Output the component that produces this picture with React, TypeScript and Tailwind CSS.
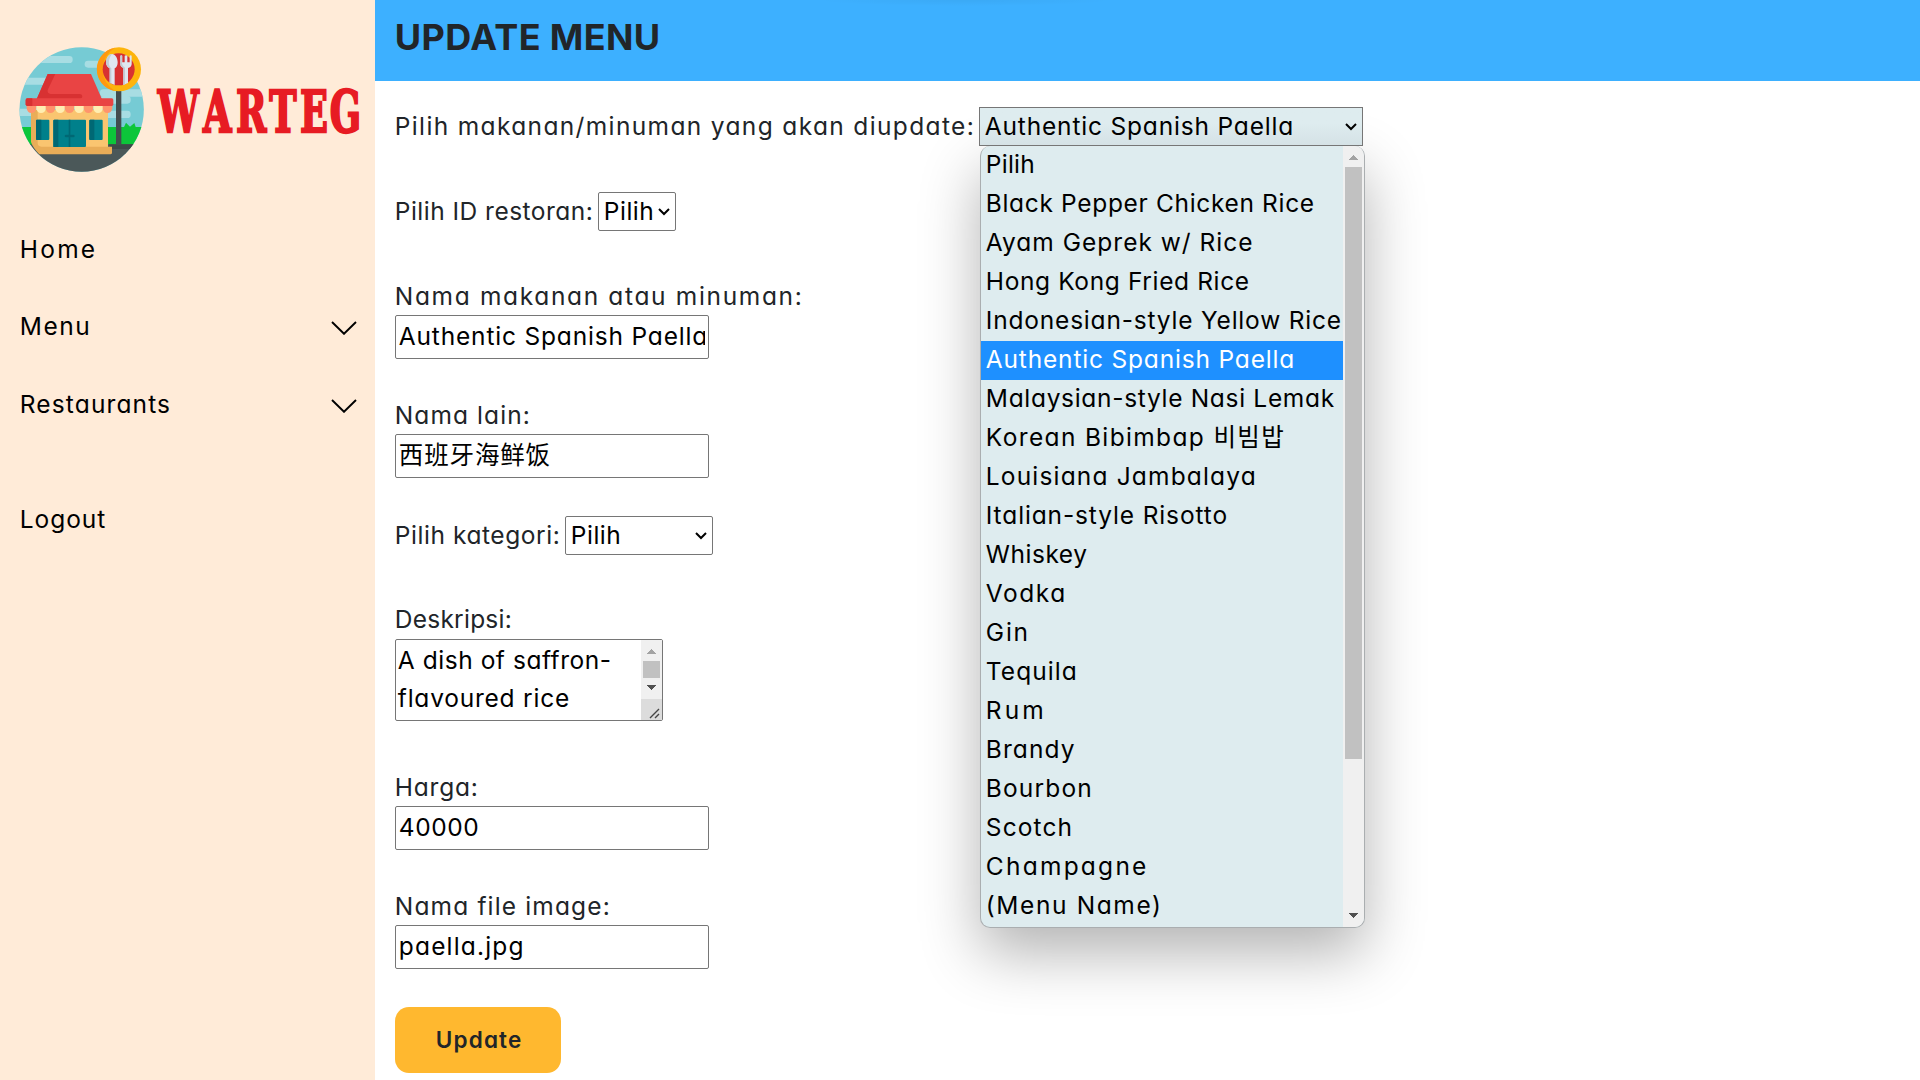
import { useLayoutEffect, useRef } from 'react';

/** Text spread by letter spacing so that its visible glyphs span `w` pixels. */
function Fit({ w, children, className = '' }: { w: number; children: string; className?: string }) {
  const ref = useRef<HTMLSpanElement>(null);
  useLayoutEffect(() => {
    const el = ref.current;
    const ctx = document.createElement('canvas').getContext('2d');
    if (!el || !ctx) return;
    const cs = getComputedStyle(el);
    // Side bearings are measured at ten times the size to avoid pixel rounding.
    ctx.font = `${cs.fontWeight} ${parseFloat(cs.fontSize) * 10}px ${cs.fontFamily}`;
    el.style.letterSpacing = '0px';
    const natural = el.getBoundingClientRect().width;
    const chars = Array.from(children);
    const first = ctx.measureText(chars[0]);
    const last = ctx.measureText(chars[chars.length - 1]);
    const lsb = -first.actualBoundingBoxLeft / 10;
    const rsb = (last.width - last.actualBoundingBoxRight) / 10;
    el.style.letterSpacing = `${(w - 1 - (natural - lsb - rsb)) / (chars.length - 1)}px`;
  }, [w, children]);
  return (
    <span ref={ref} className={`-ml-[1.2px] inline-block whitespace-pre ${className}`}>
      {children}
    </span>
  );
}

function Logo() {
  return (
    <svg className="block h-[160px] w-[375px]" viewBox="0 0 1125 480">
      <defs>
        <clipPath id="disc">
          <circle cx="245" cy="238.500" r="186.500" />
        </clipPath>
      </defs>
      <g clipPath="url(#disc)">
        <rect x="50" y="40" width="400" height="400" fill="#76cbd4" />
        <g fill="#a8dde3">
          <rect x="60" y="78" width="158" height="21" rx="10" />
          <rect x="254" y="92" width="90" height="21" rx="10" />
          <rect x="40" y="143" width="110" height="21" rx="10" />
          <rect x="40" y="236" width="80" height="22" rx="10" />
          <rect x="300" y="178" width="150" height="22" rx="10" />
          <rect x="300" y="198" width="92" height="23" rx="10" />
          <rect x="300" y="242" width="92" height="22" rx="10" />
        </g>
        <path d="M50 291H372L378 278 390 290 403 279 407 291H450V345H50Z" fill="#0cc63a" />
        <rect x="50" y="343" width="400" height="100" fill="#4b5859" />
        <path d="M326 343H420L400 357H336Z" fill="#3e4949" />
        <rect x="348" y="178" width="16" height="168" fill="#434d4e" />
      </g>
      <path d="M93 240H324V352H105L93 330Z" fill="#fac570" />
      <path d="M93 240H113V340Q114 350 124 350H336V368Q336 373 331 373H118Q98 352 93 336Z" fill="#e9ad58" />
      <rect x="108" y="269" width="40" height="61" rx="3" fill="#00808b" />
      <path d="M111 269H124V330H111Q108 330 108 327V272Q108 269 111 269Z" fill="#006874" />
      <rect x="268" y="269" width="40" height="61" rx="3" fill="#00808b" />
      <path d="M271 269H283V330H271Q268 330 268 327V272Q268 269 271 269Z" fill="#006874" />
      <rect x="160" y="269" width="98" height="82" rx="3" fill="#00808b" />
      <path d="M163 269H175V351H160V272Q160 269 163 269Z" fill="#006874" />
      <path d="M206 269H211V314H220Q224 314 224 318 224 322 220 322H211V351H206V322H198Q194 322 194 318 194 314 198 314H206Z" fill="#006874" />
      <path d="M143 132H273L306 208H110Z" fill="#e94444" />
      <path d="M143 132H166L143 180Q141 191 152 192H240Q247 193 247 199 247 206 240 207H110Z" fill="#d83132" />
      {[80, 109, 137, 166, 194, 223, 251, 280, 308].map((x, i) => (
        <path
          key={x}
          d={`M${x} 226H${x + 29}V235Q${x + 27} 249 ${x + 14} 249 ${x + 2} 249 ${x} 235Z`}
          fill={i % 2 ? '#ffeeb2' : '#ff946c'}
        />
      ))}
      <rect x="77" y="205" width="263" height="23" rx="5" fill="#e94444" />
      <path d="M82 205H97V228H82Q77 228 77 223V210Q77 205 82 205Z" fill="#d83132" />
      <circle cx="357" cy="118" r="66" fill="#fdb40c" />
      <path d="M345 53A66 66 0 0 0 345 183Q308 160 308 118 308 76 345 53Z" fill="#ff9811" />
      <circle cx="356" cy="118" r="48" fill="#d83132" />
      <path d="M336 72C325 72 318 86 318 97 318 107 324 113 329 115V158L344 165V115C350 113 353 106 353 97 353 86 347 72 336 72Z" fill="#dfe7f0" />
      <path d="M336 72C325 72 318 86 318 97 318 107 324 113 329 115V158L334 161V115C324 108 324 86 336 72Z" fill="#c2cdd6" />
      <path d="M361 77Q364 74 367 77V97H374V77Q378 74 382 77V97H389V77Q392 74 395 77V103Q394 112 384 114V159L370 165V114Q361 111 361 103Z" fill="#dfe7f0" />
      <path d="M361 77Q364 74 366 77V101Q368 110 375 113V163L370 165V114Q361 111 361 103Z" fill="#c2cdd6" />
      <text
        transform="scale(0.64 1)"
        x="739 952 1106 1262 1406 1546"
        y="307"
        fill="#e71b23"
        stroke="#e71b23"
        strokeWidth="7"
        className="font-['DejaVu_Serif'] text-[172px] font-bold"
      >
        WARTEG
      </text>
    </svg>
  );
}

function NavChevron() {
  return (
    <svg className="mt-[14px] h-[14px] w-[26px]" viewBox="0 0 26 14" fill="none" stroke="#000" strokeWidth="1.900">
      <path d="M1 1 13 12.800 25 1" />
    </svg>
  );
}

function SelectChevron() {
  return (
    <svg className="mt-[15px] h-[8px] w-[12px]" viewBox="0 0 12 8" fill="none" stroke="#000" strokeWidth="2">
      <path d="M1 1 6 6 11 1" />
    </svg>
  );
}

function Arrow({ up = false }: { up?: boolean }) {
  return (
    <svg className="h-[5px] w-[9px]" viewBox="0 0 9 5" shapeRendering="crispEdges">
      {up ? <path d="M0 5 4.500 0 9 5Z" fill="#a3a3a3" /> : <path d="M0 0H9L4.500 5Z" fill="#505050" />}
    </svg>
  );
}

function Field({ label, labelW, value, valueW }: { label: string; labelW: number; value: string; valueW: number }) {
  return (
    <div>
      <div className="h-[38px] pl-px leading-[38px]">
        <Fit w={labelW}>{label}</Fit>
      </div>
      <div className="h-[44px] w-[314px] rounded-[2px] border border-[#767676] pl-0.5 pr-[3px] leading-[40px] text-black">
        <div className="h-full overflow-hidden whitespace-nowrap pl-0.5">
          <Fit w={valueW}>{value}</Fit>
        </div>
      </div>
    </div>
  );
}

const options: [string, number][] = [
  ['Pilih', 46],
  ['Black Pepper Chicken Rice', 326],
  ['Ayam Geprek w/ Rice', 266],
  ['Hong Kong Fried Rice', 261],
  ['Indonesian-style Yellow Rice', 353],
  ['Authentic Spanish Paella', 307],
  ['Malaysian-style Nasi Lemak', 347],
  ['Korean Bibimbap 비빔밥', 296],
  ['Louisiana Jambalaya', 267],
  ['Italian-style Risotto', 239],
  ['Whiskey', 101],
  ['Vodka', 78],
  ['Gin', 40],
  ['Tequila', 89],
  ['Rum', 55],
  ['Brandy', 87],
  ['Bourbon', 103],
  ['Scotch', 84],
  ['Champagne', 159],
  ['(Menu Name)', 171],
];

export default function App() {
  return (
    <div className="flex h-[1080px] w-[1920px] overflow-hidden bg-white font-['Inter','Noto_Sans_CJK_SC',sans-serif] text-[24.5px] text-[#212529] [font-feature-settings:'cv11']">
      <aside className="w-[375px] shrink-0 bg-[#ffebd8] pt-[30px] text-black">
        <Logo />
        <nav className="flex flex-col pl-[21px] pr-[18px] pt-10 leading-[38px]">
          <div className="h-[77px]"><Fit w={73}>Home</Fit></div>
          <div className="flex h-[78px] justify-between"><Fit w={67}>Menu</Fit><NavChevron /></div>
          <div className="flex h-[115px] justify-between"><Fit w={148}>Restaurants</Fit><NavChevron /></div>
          <div><Fit w={84}>Logout</Fit></div>
        </nav>
      </aside>

      <main className="flex grow flex-col">
        <header className="relative h-[81px] shrink-0 bg-[#3db0ff] pl-[21px] text-[36px] font-bold leading-[74px]">
          <Fit w={262}>UPDATE MENU</Fit>
          <div className="absolute left-[440px] top-0 h-1.5 w-[300px] bg-radial-[50%_100%_at_50%_0%] from-black/4 to-transparent" />
        </header>

        <div className="flex flex-col items-start pl-5 pt-[26px]">
          <div className="flex h-[39px] pl-px leading-[38px]">
            <div className="w-[583px]"><Fit w={576}>Pilih makanan/minuman yang akan diupdate:</Fit></div>
            <div className="relative">
              <div className="relative z-10 flex h-[39px] w-[384px] justify-between border border-[#767676] bg-[#deecef] bg-linear-to-b from-[#deecef] from-40% to-[#d5e2e6] pl-1.5 pr-[5px] leading-[36px] text-black">
                <Fit w={307}>Authentic Spanish Paella</Fit>
                <SelectChevron />
              </div>
              <div className="absolute left-px top-[39px] flex h-[782px] w-[385px] overflow-hidden rounded-[10px] border border-t-0 border-[#aaaeb0] bg-[#deecef] text-black shadow-[0_25px_60px_rgba(0,0,0,0.3)]">
                <ul className="w-[362px]">
                  {options.map(([name, w], i) => (
                    <li
                      key={name}
                      className={i === 5 ? 'h-[39px] bg-[#1e90ff] pl-1.5 leading-[36px] text-white' : 'h-[39px] pl-1.5 leading-[36px]'}
                    >
                      <Fit w={w}>{name}</Fit>
                    </li>
                  ))}
                </ul>
                <div className="flex w-[21px] flex-col items-center bg-[#f0f0f0] pt-[9px]">
                  <Arrow up />
                  <div className="mt-[7px] h-[592px] w-[17px] bg-[#c1c1c1]" />
                  <div className="mt-[154px] flex"><Arrow /></div>
                </div>
              </div>
            </div>
          </div>

          <div className="mt-[46px] flex h-[39px] pl-px leading-[38px]">
            <div className="w-[202px]"><Fit w={195}>Pilih ID restoran:</Fit></div>
            <div className="flex w-[78px] justify-between rounded-[2px] border border-[#767676] pl-1.5 pr-[5px] leading-[36px] text-black">
              <Fit w={47}>Pilih</Fit>
              <SelectChevron />
            </div>
          </div>

          <div className="mt-[46px]">
            <Field label="Nama makanan atau minuman:" labelW={404} value="Authentic Spanish Paella" valueW={307} />
          </div>
          <div className="mt-[37px]">
            <Field label="Nama lain:" labelW={132} value="西班牙海鲜饭" valueW={150} />
          </div>

          <div className="mt-[38px] flex h-[39px] pl-px leading-[38px]">
            <div className="w-[169px]"><Fit w={162}>Pilih kategori:</Fit></div>
            <div className="flex w-[148px] justify-between rounded-[2px] border border-[#767676] pl-1.5 pr-[5px] leading-[36px] text-black">
              <Fit w={47}>Pilih</Fit>
              <SelectChevron />
            </div>
          </div>

          <div className="mt-[45px] h-[39px] pl-px leading-[38px]">
            <Fit w={114}>Deskripsi:</Fit>
          </div>
          <div className="flex h-[82px] w-[268px] justify-between rounded-[2px] border border-[#767676] text-black">
            <div className="flex flex-col items-start pl-[3px] pt-px leading-[38px]">
              <Fit w={212}>A dish of saffron-</Fit>
              <Fit w={171}>flavoured rice</Fit>
            </div>
            <div className="flex w-[21px] flex-col items-center bg-[#f0f0f0] pt-[9px]">
              <Arrow up />
              <div className="mt-[7px] h-[17px] w-[17px] shrink-0 bg-[#c1c1c1]" />
              <div className="mt-[7px] flex"><Arrow /></div>
              <div className="mt-[9px] flex h-[21px] w-[21px] items-end justify-end bg-[#dcdcdc] pb-px pr-0.5">
                <svg className="h-[11px] w-[11px]" viewBox="0 0 11 11" stroke="#454545" strokeWidth="1.400">
                  <path d="M1 10 10 1M6 10 10 6" />
                </svg>
              </div>
            </div>
          </div>

          <div className="mt-[47px]">
            <Field label="Harga:" labelW={80} value="40000" valueW={78} />
          </div>
          <div className="mt-[37px]">
            <Field label="Nama file image:" labelW={212} value="paella.jpg" valueW={122} />
          </div>

          <button className="mt-[38px] h-[66px] w-[166px] rounded-[14px] bg-[#ffb82f] pl-[42px] text-left text-[22.5px] font-semibold leading-[66px]">
            <Fit w={84}>Update</Fit>
          </button>
        </div>
      </main>
    </div>
  );
}
